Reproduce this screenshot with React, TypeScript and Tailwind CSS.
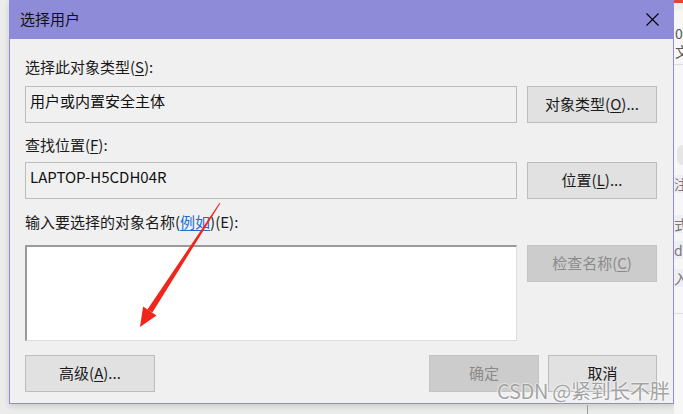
import type { ReactNode } from 'react';

const font = { fontFamily: '"Noto Sans CJK SC", "Noto Sans", sans-serif' };

function Mn({ children }: { children: ReactNode }) {
  return <span className="underline underline-offset-2 decoration-1">{children}</span>;
}

function Btn({ children, disabled, className = '' }: { children: ReactNode; disabled?: boolean; className?: string }) {
  return (
    <button
      className={`flex items-center justify-center text-[15px] ${
        disabled
          ? 'bg-[#cccccc] border border-[#c4c4c4] text-[#8a8a8a]'
          : 'bg-[#e1e1e1] border border-[#bdbdbd] text-[#1a1a1a]'
      } ${className}`}
    >
      {children}
    </button>
  );
}

function Field({ children }: { children: ReactNode }) {
  return (
    <div className="w-[492px] h-[37px] border border-[#bcbcbc] bg-[#f0f0f0] px-[4px] pt-[4px] text-[15px] leading-[20px] text-[#111]">
      {children}
    </div>
  );
}

export default function App() {
  return (
    <div className="relative w-[683px] h-[414px] overflow-hidden bg-[#ebebeb] flex" style={font}>
      {/* left strip */}
      <div className="w-[9px] h-full bg-[#ececec]" />

      {/* dialog */}
      <div className="w-[665px] h-[404px] flex flex-col bg-[#f0f0f0] border-l border-r border-b border-[#8e8cd8] shadow-[0_2px_6px_rgba(0,0,0,0.15)]">
        <div className="h-[39px] bg-[#8e8cd8] flex items-center justify-between pl-[10px] pr-[14px] shrink-0">
          <span className="text-[15px] text-[#111]">选择用户</span>
          <svg width="13" height="13" viewBox="0 0 13 13" className="text-black">
            <path d="M0.5 0.5 L12.5 12.5 M12.5 0.5 L0.5 12.5" stroke="currentColor" strokeWidth="1.1" />
          </svg>
        </div>

        <div className="flex flex-col pl-[15px] text-[15px] text-[#1a1a1a]">
          <div className="mt-[18px] h-[20px] leading-[20px]">
            选择此对象类型(<Mn>S</Mn>):
          </div>
          <div className="mt-[9px] flex gap-[10px]">
            <Field>用户或内置安全主体</Field>
            <Btn className="w-[130px] h-[37px]">
              对象类型(<Mn>O</Mn>)...
            </Btn>
          </div>

          <div className="mt-[12px] h-[20px] leading-[20px]">
            查找位置(<Mn>F</Mn>):
          </div>
          <div className="mt-[7px] flex gap-[10px]">
            <Field>LAPTOP-H5CDH04R</Field>
            <Btn className="w-[130px] h-[37px]">
              位置(<Mn>L</Mn>)...
            </Btn>
          </div>

          <div className="mt-[13px] h-[20px] leading-[20px]">
            输入要选择的对象名称(
            <span className="text-[#1a6fd1] underline underline-offset-2 decoration-1">例如</span>)(E):
          </div>
          <div className="mt-[13px] flex gap-[10px] items-start">
            <div className="w-[492px] h-[96px] bg-white border-t-2 border-l-2 border-[#9a9a9a] border-r border-b border-r-[#dcdcdc] border-b-[#dcdcdc]" />
            <Btn disabled className="w-[130px] h-[37px]">
              检查名称(<Mn>C</Mn>)
            </Btn>
          </div>

          <div className="mt-[14px] flex">
            <Btn className="w-[130px] h-[37px]">
              高级(<Mn>A</Mn>)...
            </Btn>
            <div className="flex-1" />
            <div className="flex gap-[9px] pr-[16px]">
              <Btn disabled className="w-[110px] h-[37px]">确定</Btn>
              <Btn className="w-[109px] h-[37px]">取消</Btn>
            </div>
          </div>
        </div>
      </div>

      {/* window behind, right strip */}
      <div className="w-[9px] h-full bg-[#f7f7f7] overflow-hidden flex flex-col text-[14px] text-[#555] leading-[18px]">
        <div className="h-[3px] bg-[#e8452f]" />
        <div className="h-[7px] bg-[#efefef]" />
        <div className="pl-[1px] mt-[14px] h-[18px]">0</div>
        <div className="pl-[1px] h-[18px]">文</div>
        <div className="mt-[4px] h-px bg-[#dddddd]" />
        <div className="mt-[80px] h-[20px] rounded-l-full bg-[#e6e6e6] ml-[3px]" />
        <div className="mt-[10px] h-[18px] bg-[#eeeef4] text-[#777]">注</div>
        <div className="mt-[22px] h-[18px] bg-[#eeeef4] text-[#777]">式</div>
        <div className="mt-[8px] h-[18px] bg-[#eeeef4] text-[#777]">d</div>
        <div className="mt-[10px] h-[18px] bg-[#eeeef4] text-[#777]">入</div>
        <div className="mt-[26px] h-px bg-[#dddddd]" />
      </div>

      {/* line under dialog */}
      <div className="absolute left-[587px] top-[405px] w-px h-[9px] bg-[#9a9a9a]" />

      {/* red annotation arrow */}
      <svg className="absolute left-0 top-0 pointer-events-none" width="683" height="414">
        <polygon points="219.6,202.7 220.4,203.3 152.4,312.6 147.4,309.4" fill="#f0261b" />
        <polygon points="140,327 143.1,306.6 149.8,311 156.5,315.4" fill="#f0261b" />
      </svg>

      {/* watermark */}
      <div className="absolute left-[497px] top-[378px] text-[20px] leading-[26px] text-[#a3a3a3] tracking-[-0.3px] [text-shadow:0_0_2px_#fff,0_0_2px_#fff]">
        CSDN @紧到长不胖
      </div>
    </div>
  );
}
